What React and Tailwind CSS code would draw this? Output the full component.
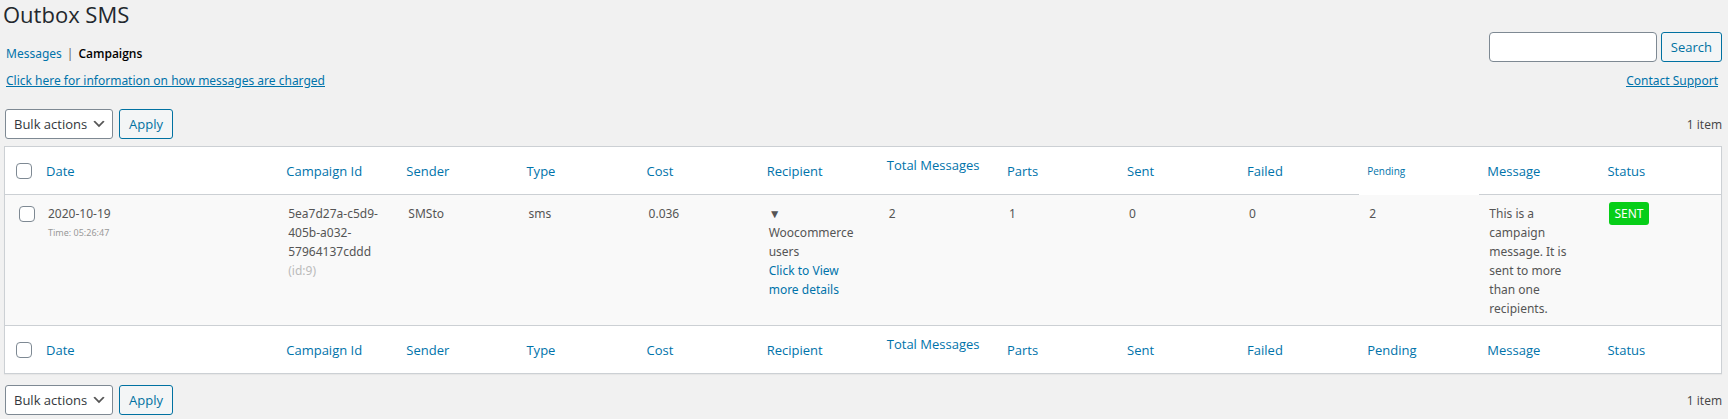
const COLUMNS = [
  "Date",
  "Campaign Id",
  "Sender",
  "Type",
  "Cost",
  "Recipient",
  "Total Messages",
  "Parts",
  "Sent",
  "Failed",
  "Pending",
  "Message",
  "Status",
];

const BUTTON =
  "h-[30px] cursor-pointer rounded-[3px] border border-[#0071a1] bg-[#f3f5f6] px-[9px] text-[13px] text-[#0071a1]";
const CHECKBOX =
  "block size-4 appearance-none rounded-[4px] border border-[#7e8993] bg-white checked:bg-[#0073aa]";

function BulkBar({ className }) {
  return (
    <div className={`flex items-center justify-between pl-px ${className}`}>
      <div className="flex items-center gap-1.5">
        <div className="relative">
          <select
            aria-label="Select bulk action"
            className="block h-[30px] w-[108px] appearance-none rounded-[3px] border border-[#7e8993] bg-white pl-2 text-[13px] text-[#32373c]"
          >
            <option>Bulk actions</option>
          </select>
          <svg
            viewBox="0 0 20 20"
            aria-hidden="true"
            className="pointer-events-none absolute top-[7px] right-[6px] size-4"
          >
            <path d="M5 6l5 5 5-5 2 1-7 7-7-7 2-1z" fill="#555" />
          </svg>
        </div>
        <button type="button" className={BUTTON}>
          Apply
        </button>
      </div>
      <span className="text-[12px] text-[#444]">1 item</span>
    </div>
  );
}

function HeadingRow({ position, plainPending }) {
  return (
    <tr className="h-[48px]">
      <td className="pl-[11px]">
        <input
          type="checkbox"
          aria-label={`Select all (${position})`}
          className={CHECKBOX}
        />
      </td>
      {COLUMNS.map((name) => {
        const small = name === "Pending" && !plainPending;
        return (
          <th
            key={name}
            scope="col"
            className={
              small
                ? "border-b border-white px-2 pt-0.5 text-left font-['Open_Sans',sans-serif] text-[10px] font-normal"
                : "px-2 pt-0.5 text-left font-['Open_Sans',sans-serif] text-[13px] font-normal"
            }
          >
            <a
              href="#"
              className={
                name === "Total Messages"
                  ? "block pb-3 whitespace-nowrap text-[#0073aa]"
                  : "block text-[#0073aa]"
              }
            >
              {name}
            </a>
          </th>
        );
      })}
    </tr>
  );
}

export default function App() {
  return (
    <div className="min-h-screen bg-[#f1f1f1] pr-1.5 pb-1 pl-1 font-['Noto_Sans','Open_Sans',sans-serif] text-[12px] leading-[19px] text-[#555]">
      <h1 className="-ml-px pb-1 font-['Open_Sans',sans-serif] text-[22px] leading-7 text-[#23282d]">
        Outbox SMS
      </h1>

      <div className="flex items-start justify-between pl-0.5">
        <nav className="flex gap-[5px] pt-3 text-[#666]">
          <a href="#" className="text-[#0073aa]">
            Messages
          </a>
          <span>|</span>
          <a
            href="#"
            className="font-['Open_Sans',sans-serif] font-semibold text-black"
          >
            Campaigns
          </a>
        </nav>
        <form
          className="flex gap-1 font-['Open_Sans',sans-serif]"
          onSubmit={(e) => e.preventDefault()}
        >
          <input
            type="search"
            aria-label="Search campaigns"
            className="h-[30px] w-[168px] rounded-[4px] border border-[#7e8993] bg-white px-2"
          />
          <button type="submit" className={BUTTON}>
            Search
          </button>
        </form>
      </div>

      <div className="flex justify-between pt-2 pr-1 pl-0.5 text-[#0073aa] underline">
        <a href="#">Click here for information on how messages are charged</a>
        <a href="#">Contact Support</a>
      </div>

      <BulkBar className="pt-[19px] pb-[7px] font-['Open_Sans',sans-serif]" />

      <table className="w-full table-fixed border-separate border-spacing-0 border border-[#ccd0d4] bg-white shadow-[0_1px_1px_rgba(0,0,0,0.04)]">
        <colgroup>
          <col className="w-[33px]" />
          <col className="w-[14%]" />
          <col span={11} className="w-[7%]" />
          <col />
        </colgroup>
        <thead className="[&_td]:border-b [&_td]:border-[#ccd0d4] [&_th]:border-b [&_th:not(.border-white)]:border-[#ccd0d4]">
          <HeadingRow position="top" />
        </thead>
        <tbody className="bg-[#f9f9f9]">
          <tr className="align-top [&>td]:pt-[9px] [&>td]:pb-[7px] [&>td:not(:first-child)]:px-2.5">
            <td className="pl-[14px]">
              <input
                type="checkbox"
                aria-label="Select campaign"
                className={`mt-0.5 ${CHECKBOX}`}
              />
            </td>
            <td>
              2020-10-19
              <div className="text-[9px] text-[#999]">Time: 05:26:47</div>
            </td>
            <td>
              5ea7d27a-c5d9-
              <br />
              405b-a032-
              <br />
              57964137cddd
              <br />
              <span className="text-[#bbb]">(id:9)</span>
            </td>
            <td>SMSto</td>
            <td>sms</td>
            <td>0.036</td>
            <td>
              ▼<br />
              Woocommerce
              <br />
              users
              <br />
              <a href="#" className="text-[#0073aa]">
                Click to View
                <br />
                more details
              </a>
            </td>
            <td>2</td>
            <td>1</td>
            <td>0</td>
            <td>0</td>
            <td>2</td>
            <td>
              This is a<br />
              campaign
              <br />
              message. It is
              <br />
              sent to more
              <br />
              than one
              <br />
              recipients.
            </td>
            <td>
              <span className="-mt-0.5 inline-block rounded-[3px] bg-[#07ce18] px-[5px] py-0.5 text-white">
                SENT
              </span>
            </td>
          </tr>
        </tbody>
        <tfoot className="[&_td]:border-t [&_td]:border-[#ccd0d4] [&_th]:border-t [&_th]:border-[#ccd0d4]">
          <HeadingRow position="bottom" plainPending />
        </tfoot>
      </table>

      <BulkBar className="pt-[11px] font-['Open_Sans',sans-serif]" />
    </div>
  );
}
